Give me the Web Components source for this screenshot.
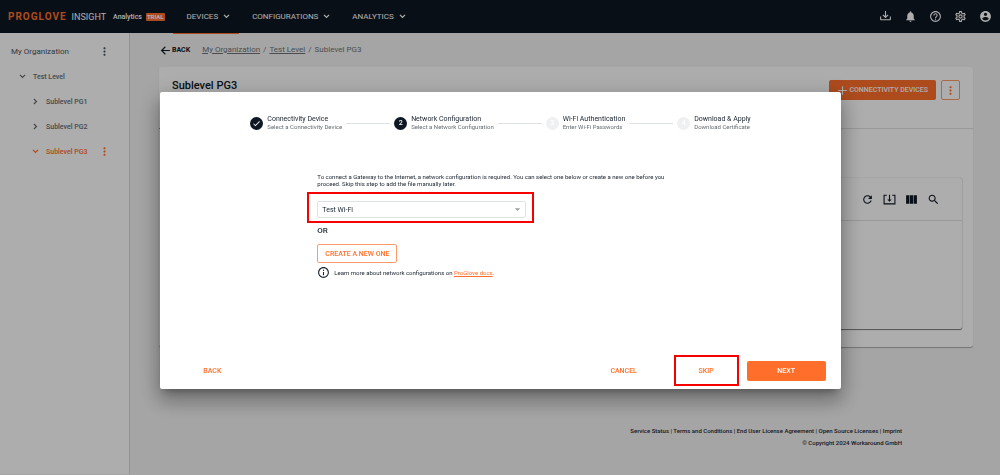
<!DOCTYPE html>
<html lang="en">
<head>
<meta charset="utf-8">
<meta name="viewport" content="width=device-width, initial-scale=1">
<title>ProGlove Insight</title>
<style>
  :root {
    --orange: #ff6f2b;
    --navy: #0e1722;
    --ink: #1b2530;
    --muted: #666d73;
    --line: #dfe2e3;
  }
  body { margin: 0; font: 400 7px/10px Roboto, "Liberation Sans", sans-serif; color: var(--ink); }
</style>
</head>
<body>
<insight-app></insight-app>

<script>
const ICONS = {
  chevron: 'M7.41 7.600 12 12.170l4.590-4.570L18.500 9.500 12 16 5.500 9.500z',
  chevronRight: 'M7.600 16.590 12.170 12 7.600 7.410 9.500 5.500 16 12l-6.500 6.500z',
  dots: 'M12 8c1.1 0 2-.9 2-2s-.9-2-2-2-2 .9-2 2 .9 2 2 2zm0 2c-1.1 0-2 .9-2 2s.9 2 2 2 2-.9 2-2-.9-2-2-2zm0 6c-1.1 0-2 .9-2 2s.9 2 2 2 2-.9 2-2-.9-2-2-2z',
  arrowBack: 'M20 10.900H7.400l5-5L11 4.300 3.300 12l7.700 7.700 1.400-1.600-5-5H20z',
  tray: 'M2 12H4V17H20V12H22V17C22 18.11 21.11 19 20 19H4C2.9 19 2 18.11 2 17V12M12 15L17.55 9.54L16.13 8.13L13 11.25V2H11V11.25L7.88 8.13L6.46 9.55L12 15Z',
  bell: 'M12 22c1.1 0 2-.9 2-2h-4c0 1.1.89 2 2 2zm6-6v-5c0-3.07-1.64-5.64-4.5-6.32V4c0-.83-.67-1.5-1.5-1.5s-1.5.67-1.5 1.5v.68C7.63 5.36 6 7.92 6 11v5l-2 2v1h16v-1l-2-2z',
  help: 'M11 18h2v-2h-2v2zm1-16C6.48 2 2 6.48 2 12s4.48 10 10 10 10-4.48 10-10S17.52 2 12 2zm0 18c-4.41 0-8-3.59-8-8s3.59-8 8-8 8 3.59 8 8-3.59 8-8 8zm0-14c-2.21 0-4 1.79-4 4h2c0-1.1.9-2 2-2s2 .9 2 2c0 2-3 1.75-3 5h2c0-2.25 3-2.5 3-5 0-2.21-1.79-4-4-4z',
  cog: 'M12,8A4,4 0 0,1 16,12A4,4 0 0,1 12,16A4,4 0 0,1 8,12A4,4 0 0,1 12,8M12,10A2,2 0 0,0 10,12A2,2 0 0,0 12,14A2,2 0 0,0 14,12A2,2 0 0,0 12,10M10,22C9.75,22 9.54,21.82 9.5,21.58L9.13,18.93C8.5,18.68 7.96,18.34 7.44,17.94L4.95,18.95C4.73,19.03 4.46,18.95 4.34,18.73L2.34,15.27C2.21,15.05 2.27,14.78 2.46,14.63L4.57,12.97L4.5,12L4.57,11L2.46,9.37C2.27,9.22 2.21,8.95 2.34,8.73L4.34,5.27C4.46,5.05 4.73,4.96 4.95,5.05L7.44,6.05C7.96,5.66 8.5,5.32 9.13,5.07L9.5,2.42C9.54,2.18 9.75,2 10,2H14C14.25,2 14.46,2.18 14.5,2.42L14.87,5.07C15.5,5.32 16.04,5.66 16.56,6.05L19.05,5.05C19.27,4.96 19.54,5.05 19.66,5.27L21.66,8.73C21.79,8.95 21.73,9.22 21.54,9.37L19.43,11L19.5,12L19.43,13L21.54,14.63C21.73,14.78 21.79,15.05 21.66,15.27L19.66,18.73C19.54,18.95 19.27,19.04 19.05,18.95L16.56,17.95C16.04,18.34 15.5,18.68 14.87,18.93L14.5,21.58C14.46,21.82 14.25,22 14,22H10M11.25,4L10.88,6.61C9.68,6.86 8.62,7.5 7.85,8.39L5.44,7.35L4.69,8.65L6.8,10.2C6.4,11.37 6.4,12.64 6.8,13.8L4.68,15.36L5.43,16.66L7.86,15.62C8.63,16.5 9.68,17.14 10.87,17.38L11.24,20H12.76L13.13,17.39C14.32,17.14 15.37,16.5 16.14,15.62L18.57,16.66L19.32,15.36L17.2,13.81C17.6,12.64 17.6,11.37 17.2,10.2L19.31,8.65L18.56,7.35L16.15,8.39C15.38,7.5 14.32,6.86 13.12,6.62L12.75,4H11.25Z',
  account: 'M12 2C6.48 2 2 6.48 2 12s4.48 10 10 10 10-4.48 10-10S17.52 2 12 2zm0 3c1.66 0 3 1.34 3 3s-1.34 3-3 3-3-1.34-3-3 1.34-3 3-3zm0 14.2c-2.5 0-4.71-1.28-6-3.22.03-1.99 4-3.08 6-3.08 1.99 0 5.97 1.09 6 3.08-1.29 1.94-3.500 3.22-6 3.22z',
  plus: 'M20 13h-7v7h-2v-7H4v-2h7V4h2v7h7z',
  refresh: 'M17.650 6.350C16.200 4.900 14.210 4 12 4c-4.420 0-7.990 3.580-7.990 8s3.570 8 7.990 8c3.730 0 6.840-2.550 7.730-6h-2.080c-.82 2.330-3.040 4-5.650 4-3.310 0-6-2.690-6-6s2.690-6 6-6c1.660 0 3.140.69 4.220 1.780L13 11h7V4z',
  importBox: 'M1 3h6v2H3v14h18V5h-4V3h6v18H1zM11 3h2v9h3l-4 4-4-4h3z',
  columns: 'M2 4h6v16H2zM9 4h6v16H9zM16 4h6v16h-6z',
  search: 'M15.500 14h-.79l-.28-.27C15.410 12.590 16 11.110 16 9.500 16 5.910 13.090 3 9.500 3S3 5.910 3 9.500 5.910 16 9.500 16c1.610 0 3.090-.59 4.230-1.570l.27.28v.79l5 4.990L20.490 19zm-6 0C7.010 14 5 11.990 5 9.500S7.010 5 9.500 5 14 7.010 14 9.500 11.990 14 9.500 14z',
  check: 'M9 16.170 4.830 12l-1.420 1.410L9 19 21 7l-1.410-1.410z',
  caret: 'M6 9l6 6 6-6z',
  info: 'M11 7h2v2h-2zm0 4h2v6h-2zm1-9C6.480 2 2 6.480 2 12s4.480 10 10 10 10-4.480 10-10S17.520 2 12 2zm0 18c-4.410 0-8-3.590-8-8s3.590-8 8-8 8 3.590 8 8-3.590 8-8 8z'
};

const RESET = `
  *, *::before, *::after { box-sizing: border-box; }
  button { font: inherit; color: inherit; background: none; border: 0; margin: 0; padding: 0; cursor: pointer; }
  a { color: inherit; text-decoration: none; }
  button { display: inline-flex; align-items: center; justify-content: center; }
`;

function define(name, render) {
  customElements.define(name, class extends HTMLElement {
    connectedCallback() {
      if (this.shadowRoot) return;
      const template = document.createElement('template');
      template.innerHTML = render(this);
      this.attachShadow({ mode: 'open' }).append(template.content.cloneNode(true));
    }
  });
}

define('ui-icon', el => `
  <style>
    :host { display: inline-block; flex: none; width: 13px; height: 13px; }
    :host([size="small"]) { width: 11px; height: 11px; }
    :host([size="tiny"]) { width: 9px; height: 9px; }
    svg { display: block; width: 100%; height: 100%; fill: currentColor; }
  </style>
  <svg viewBox="0 0 24 24" aria-hidden="true"><path d="${ICONS[el.getAttribute('name')]}"/></svg>`);

define('app-header', () => `
  <style>${RESET}
    :host { display: flex; align-items: center; height: 33px; padding: 0 8px; background: var(--navy); color: #fff; }
    .brand { display: flex; align-items: center; font-size: 10px; line-height: 12px; }
    .name { font-weight: 700; letter-spacing: 1px; color: var(--orange); }
    .product { margin-left: 5px; font-size: 9px; }
    .edition { margin-left: 7px; font-size: 7px; font-weight: 500; }
    .trial { margin-left: 4px; padding: 0 1px; background: var(--orange); border-radius: 1px; font-size: 6px; line-height: 8px; font-weight: 700; }
    nav { display: flex; gap: 20px; margin-left: 22px; flex: 1; }
    nav button { gap: 3px; font-size: 8px; }
    .tools { display: flex; gap: 12px; }
  </style>
  <div class="brand">
    <span class="name">PROGLOVE</span><span class="product">INSIGHT</span>
    <span class="edition">Analytics</span><span class="trial">TRIAL</span>
  </div>
  <nav>
    <button>DEVICES <ui-icon size="small" name="chevron"></ui-icon></button>
    <button>CONFIGURATIONS <ui-icon size="small" name="chevron"></ui-icon></button>
    <button>ANALYTICS <ui-icon size="small" name="chevron"></ui-icon></button>
  </nav>
  <div class="tools">
    <button aria-label="Downloads"><ui-icon name="tray"></ui-icon></button>
    <button aria-label="Notifications"><ui-icon name="bell"></ui-icon></button>
    <button aria-label="Help"><ui-icon name="help"></ui-icon></button>
    <button aria-label="Settings"><ui-icon name="cog"></ui-icon></button>
    <button aria-label="Account"><ui-icon name="account"></ui-icon></button>
  </div>`);

define('tree-item', el => `
  <style>${RESET}
    :host { display: flex; align-items: center; height: 25px; font-weight: 500; color: var(--muted); }
    :host([level="0"]) { font-size: 8px; padding-left: 11px; font-weight: 400; color: #4b535a; }
    :host([level="1"]) { padding-left: 17px; }
    :host([level="2"]) { padding-left: 30px; }
    :host([active]) { color: var(--orange); }
    .label { flex: 1; justify-content: flex-start; gap: 5px; }
    .menu { margin-right: 18px; }
  </style>
  <button class="label">${el.hasAttribute('icon') ? `<ui-icon size="small" name="${el.getAttribute('icon')}"></ui-icon>` : ''}<slot></slot></button>
  ${el.hasAttribute('menu') ? '<button class="menu" aria-label="More"><ui-icon name="dots"></ui-icon></button>' : ''}`);

define('org-tree', () => `
  <style>
    :host { display: block; padding-top: 6px; background: #fff; border-right: 1px solid #d4d6d8; }
  </style>
  <tree-item level="0" menu>My Organization</tree-item>
  <tree-item level="1" icon="chevron">Test Level</tree-item>
  <tree-item level="2" icon="chevronRight">Sublevel PG1</tree-item>
  <tree-item level="2" icon="chevronRight">Sublevel PG2</tree-item>
  <tree-item level="2" icon="chevron" active menu>Sublevel PG3</tree-item>`);

define('crumb-bar', () => `
  <style>${RESET}
    :host { display: flex; align-items: center; height: 34px; padding-left: 29px; }
    .back { font-size: 7px; font-weight: 700; color: var(--navy); }
    ol { display: flex; gap: 3px; list-style: none; margin: 0 0 0 12px; padding: 0; font-size: 8px; color: #6d747a; }
    a { text-decoration: underline; }
  </style>
  <button class="back"><ui-icon name="arrowBack"></ui-icon>BACK</button>
  <ol>
    <li><a href="#org">My Organization</a></li><li>/</li>
    <li><a href="#level">Test Level</a></li><li>/</li>
    <li>Sublevel PG3</li>
  </ol>`);

define('device-table', () => `
  <style>${RESET}
    :host { display: block; height: 151px; border-radius: 2px; background: #fff; box-shadow: 0 1px 1px rgba(0,0,0,.5), 0 0 1px rgba(0,0,0,.4); }
    .bar { display: flex; align-items: center; justify-content: flex-end; gap: 9px; height: 43px; padding-right: 22px; border-bottom: 1px solid var(--line); color: var(--navy); }
  </style>
  <div class="bar">
    <button aria-label="Refresh"><ui-icon name="refresh"></ui-icon></button>
    <button aria-label="Export"><ui-icon name="importBox"></ui-icon></button>
    <button aria-label="Columns"><ui-icon name="columns"></ui-icon></button>
    <button aria-label="Search"><ui-icon name="search"></ui-icon></button>
  </div>`);

define('level-card', () => `
  <style>${RESET}
    :host { display: block; margin: 0 27px 0 29px; padding: 13px 0 18px; border-radius: 3px; background: #fff; box-shadow: 0 1px 1px rgba(0,0,0,.3); }
    header { display: flex; align-items: flex-start; gap: 5px; padding: 0 13px; }
    h1 { flex: 1; margin: 0; font-size: 11px; line-height: 12px; font-weight: 500; color: var(--navy); }
    .add { height: 20px; padding: 0 8px 0 7px; background: var(--orange); color: #fff; border-radius: 2px; font-weight: 500; }
    .more { width: 19px; height: 20px; border: 1px solid #ff9a6a; border-radius: 2px; color: var(--orange); }
    .tabs { height: 29px; border-bottom: 1px solid var(--line); }
    .tabs::after { content: ""; display: block; width: 80px; height: 29px; border-bottom: 1px solid var(--orange); }
    device-table { margin: 49px 11px 0 10px; }
  </style>
  <header>
    <h1>Sublevel PG3</h1>
    <button class="add"><ui-icon name="plus"></ui-icon>CONNECTIVITY DEVICES</button>
    <button class="more" aria-label="More"><ui-icon name="dots"></ui-icon></button>
  </header>
  <div class="tabs"></div>
  <device-table></device-table>`);

define('page-footer', () => `
  <style>${RESET}
    :host { display: block; padding: 78px 98px 25px 0; text-align: right; font-size: 6px; font-weight: 500; line-height: 12px; }
    p { margin: 0; }
  </style>
  <p><a href="#status">Service Status</a> | <a href="#terms">Terms and Conditions</a> | <a href="#eula">End User License Agreement</a> | <a href="#oss">Open Source Licenses</a> | <a href="#imprint">Imprint</a></p>
  <p>© Copyright 2024 Workaround GmbH</p>`);

define('step-item', el => `
  <style>
    :host { display: flex; align-items: center; gap: 4px; flex: none; }
    .dot { display: flex; align-items: center; justify-content: center; width: 13px; height: 13px; border-radius: 50%; background: var(--navy); color: #fff; font-weight: 500; line-height: 13px; }
    :host([state="todo"]) .dot { background: #eef0f1; }
    .title { font-size: 7px; line-height: 8px; }
    .sub { font-size: 6px; line-height: 8px; color: var(--muted); }
  </style>
  <span class="dot">${el.getAttribute('state') === 'done' ? '<ui-icon size="tiny" name="check"></ui-icon>' : el.getAttribute('number')}</span>
  <div><div class="title">${el.getAttribute('label')}</div><div class="sub"><slot></slot></div></div>`);

define('call-out', () => `
  <style>
    :host { display: block; box-sizing: border-box; border: 2px solid #f60000; }
  </style>
  <slot></slot>`);

define('setup-dialog', () => `
  <style>${RESET}
    :host { display: block; width: calc(68% + 1px); background: #fff; border-radius: 2px;
      box-shadow: 0 6px 8px -4px rgba(0,0,0,.3), 0 12px 19px 2px rgba(0,0,0,.22), 0 5px 23px 4px rgba(0,0,0,.14); }
    .steps { display: flex; align-items: center; gap: 4px; padding: 23px 90px 0; }
    .steps hr { flex: 1; margin: 0; border: 0; border-top: 1px solid var(--line); }
    .body { padding: 42px 156px 0 157px; }
    p { margin: 0; font-size: 6px; line-height: 7px; }
    .pick { width: 227px; margin: 5px 0 0 -10px; padding: 7px 6px 3px 8px; }
    .field { display: grid; align-items: center; }
    .field > * { grid-area: 1 / 1; }
    .field ui-icon { justify-self: end; margin-right: 3px; color: #9aa0a4; pointer-events: none; }
    select { appearance: none; width: 100%; height: 17px; padding: 0 4px; border: 1px solid var(--line); border-radius: 2px; background: #fff; font: inherit; color: var(--ink); }
    .or { margin-top: 3px; font-size: 8px; line-height: 10px; font-weight: 500; }
    .create { height: 19px; margin-top: 8px; padding: 0 7px; border: 1px solid #ff9a6a; border-radius: 2px; color: var(--orange); font-weight: 500; }
    .learn { display: flex; align-items: center; gap: 4px; margin-top: 3px; }
    .learn a { color: var(--orange); text-decoration: underline; }
    footer { display: flex; align-items: center; margin-top: 76px; padding: 0 15px 3px 13px; color: var(--orange); font-weight: 500; }
    .back { width: 78px; height: 20px; margin-right: auto; }
    .cancel { width: 100px; height: 20px; }
    .skip { width: 61px; height: 27px; }
    .next { width: 79px; height: 20px; margin-left: 8px; background: var(--orange); color: #fff; border-radius: 2px; }
  </style>
  <div class="steps">
    <step-item state="done" label="Connectivity Device">Select a Connectivity Device</step-item><hr>
    <step-item number="2" label="Network Configuration">Select a Network Configuration</step-item><hr>
    <step-item number="3" state="todo" label="Wi-Fi Authentication">Enter Wi-Fi Passwords</step-item><hr>
    <step-item number="4" state="todo" label="Download &amp; Apply">Download Certificate</step-item>
  </div>
  <div class="body">
    <p>To connect a Gateway to the Internet, a network configuration is required. You can select one below or create a new one before you proceed. Skip this step to add the file manually later.</p>
    <call-out class="pick"><div class="field">
      <select aria-label="Network configuration"><option>Test Wi-Fi</option></select>
      <ui-icon size="small" name="caret"></ui-icon>
    </div></call-out>
    <div class="or">OR</div>
    <button class="create">CREATE A NEW ONE</button>
    <div class="learn"><ui-icon name="info"></ui-icon><p>Learn more about network configurations on <a href="#docs">ProGlove docs</a>.</p></div>
  </div>
  <footer>
    <button class="back">BACK</button>
    <button class="cancel">CANCEL</button>
    <call-out><button class="skip">SKIP</button></call-out>
    <button class="next">NEXT</button>
  </footer>`);

define('insight-app', () => `
  <style>
    :host { display: block; min-height: 100vh; background: #f4f4f4; }
    .columns { display: grid; grid-template-columns: 130px 1fr; }
    main { min-width: 0; }
    main::before { content: ""; display: block; width: 66px; height: 1px; margin: 0 0 -1px 43px; background: var(--orange); }
    .backdrop { position: fixed; inset: 0; display: grid; place-items: center; padding: 6px 0 0 1px; background: rgba(0,0,0,.32); }
  </style>
  <app-header></app-header>
  <div class="columns">
    <org-tree></org-tree>
    <main>
      <crumb-bar></crumb-bar>
      <level-card></level-card>
      <page-footer></page-footer>
    </main>
  </div>
  <div class="backdrop"><setup-dialog role="dialog" aria-modal="true" aria-label="Add connectivity device"></setup-dialog></div>`);
</script>
</body>
</html>
